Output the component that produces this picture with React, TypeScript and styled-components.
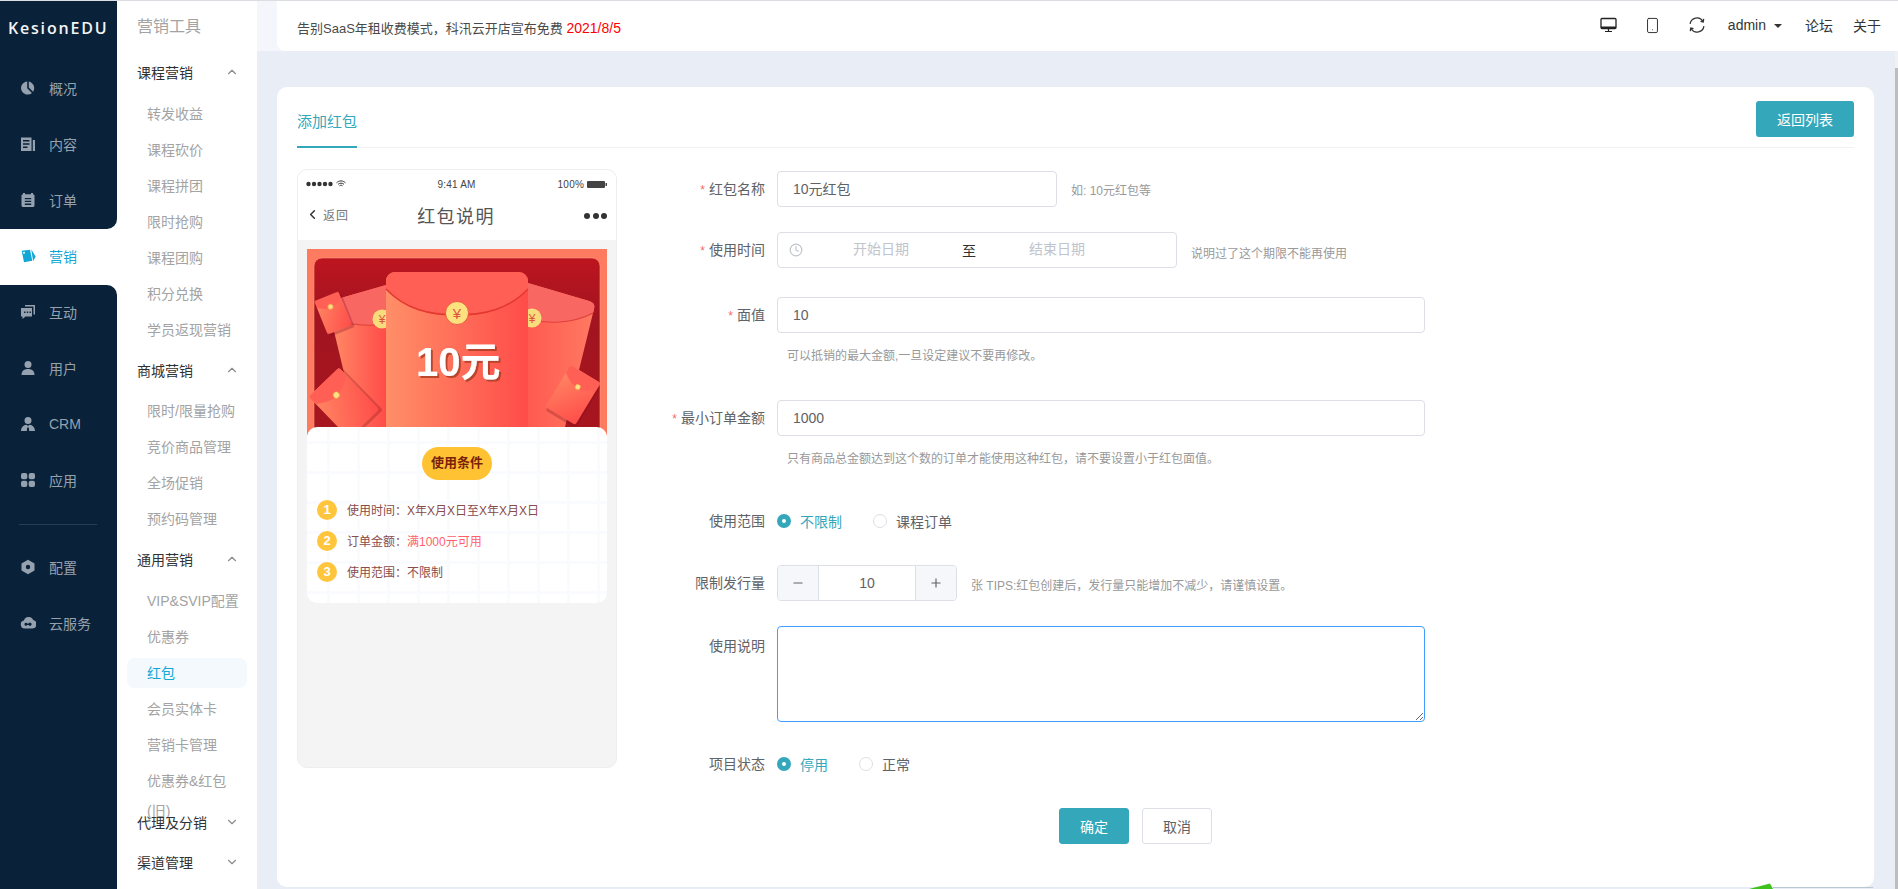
import React from 'react';
import styled, { createGlobalStyle } from 'styled-components';
import { ChevronUp, ChevronDown, ChevronLeft, Clock, Minus, Plus, Smartphone } from 'lucide-react';

const Global = createGlobalStyle`
  html, body { margin: 0; padding: 0; height: 889px; overflow: hidden; background: #fff; }
  body { font-family: "Liberation Sans", "Noto Sans CJK SC", sans-serif; font-size: 14px; }
  * { box-sizing: border-box; }
`;

const Page = styled.div`
  position: relative; display: flex; width: 1898px; height: 889px;
  border-top: 1px solid #dcdde2; overflow: hidden;
`;

/* rail */
const Rail = styled.aside`width: 117px; display: flex; flex-direction: column; background: #fff; flex: none;`;
const RailTop = styled.div`background: #0a2239; border-bottom-right-radius: 10px;`;
const RailBottom = styled.div`flex: 1; background: #0a2239; border-top-right-radius: 10px;`;
const Logo = styled.div`
  height: 60px; padding: 9px 0 0 8px; line-height: 36px; color: #f2f4f6;
  font-family: "Open Sans", "Liberation Sans", sans-serif; font-size: 16px; font-weight: 600; letter-spacing: 1.8px;
`;
const RailItem = styled.div<{ $active?: boolean }>`
  height: 56px; display: flex; align-items: center; padding: 0 0 2px 20px; gap: 13px;
  color: ${p => (p.$active ? '#12a7d6' : '#95a1af')}; font-size: 14px;
  svg { width: 16px; height: 16px; flex: none; fill: currentColor; }
`;
const RailDivider = styled.div`height: 1px; margin: 15px 20px 15px 19px; background: #2a3d52;`;

/* sub menu */
const SubNav = styled.nav`width: 140px; flex: none; background: #fff; overflow: hidden;`;
const SubTitle = styled.div`height: 51px; padding-left: 20px; line-height: 52px; font-size: 16px; color: #a3a3a3;`;
const SubHead = styled.div`
  height: 40px; margin-left: 20px; padding-right: 18px; display: flex; align-items: center; justify-content: space-between;
  color: #303133; font-size: 14px;
  svg { color: #8c8c8c; }
`;
const SubList = styled.div<{ $pt: number; $pb: number }>`
  padding: ${p => p.$pt}px 10px ${p => p.$pb}px; display: flex; flex-direction: column; gap: 6px;
`;
const SubItem = styled.div<{ $active?: boolean }>`
  height: 30px; line-height: 30px; padding-left: 20px; border-radius: 8px; font-size: 14px;
  color: ${p => (p.$active ? '#12a7d6' : '#a3a3a3')};
  background: ${p => (p.$active ? '#f3f9fd' : 'transparent')};
`;

/* main */
const Main = styled.div`flex: 1; min-width: 0; display: flex; flex-direction: column; background: #e9edf6;`;
const HeaderWrap = styled.div`height: 50px; padding-left: 20px; background: #f4f6fb; flex: none;`;
const Header = styled.header`
  height: 50px; background: #fff; border-bottom-left-radius: 8px;
  display: flex; align-items: center; justify-content: space-between; padding: 0 17px 2px 20px; color: #303133;
`;
const Notice = styled.div`padding-top: 4px; font-size: 13px; color: #4a4a4a; span { color: #f00; font-size: 14px; }`;
const HeaderTools = styled.div`display: flex; align-items: center; font-size: 14px; color: #333;`;
const ToolIcon = styled.span`display: inline-flex; width: 44px; justify-content: center;`;
const Admin = styled.span`margin-left: 9px;`;
const Caret = styled.i`display: inline-block; width: 0; height: 0; margin: 2px 23px 0 8px; border: 4px solid transparent; border-top-color: #333; border-bottom: 0;`;
const HeaderLink = styled.span`& + & { margin-left: 20px; }`;
const BodyRow = styled.div`flex: 1; min-height: 0; display: flex;`;
const Content = styled.main`flex: 1; min-width: 0; padding: 36px 21px 0 20px;`;
const Track = styled.div`width: 3px; flex: none; background: #f1f1f1; padding-top: 17px; display: flex;`;
const Thumb = styled.div`flex: 1; background: #bdbdbd;`;

const Card = styled.section`
  height: 801px; background: #fff; border-radius: 10px; padding: 0 20px; border-bottom: 1px solid #e6edf3;
`;
const TabRow = styled.div`height: 61px; display: flex; justify-content: space-between; border-bottom: 1px solid #f0f1f3;`;
const Tab = styled.div`height: 61px; padding-top: 9px; line-height: 52px; border-bottom: 2px solid #35a7bb; color: #35a7bb; font-size: 15px;`;
const ReturnBtn = styled.button`
  margin-top: 14px; width: 98px; height: 36px; border: 0; border-radius: 3px; background: #35a7bb; color: #fff;
  font: inherit; font-size: 14px;
`;
const Split = styled.div`display: flex; padding-top: 21px;`;

/* phone */
const Phone = styled.div`width: 320px; height: 599px; flex: none; border: 1px solid #ecedf0; border-radius: 10px; background: #f4f4f4; overflow: hidden;`;
const PhoneTop = styled.div`height: 70px; background: #fff;`;
const StatusBar = styled.div`height: 28px; padding: 0 9px 0 8px; display: grid; grid-template-columns: 1fr auto 1fr; align-items: center; font-size: 10px; color: #444; font-weight: 400; letter-spacing: .2px;`;
const StatusSide = styled.div<{ $end?: boolean }>`display: flex; align-items: center; gap: 3px; justify-content: ${p => (p.$end ? 'flex-end' : 'flex-start')};`;
const NavBar = styled.div`height: 36px; padding: 0 9px 3px 7px; display: grid; grid-template-columns: 1fr auto 1fr; align-items: center;`;
const BackLink = styled.div`display: flex; align-items: center; gap: 3px; font-size: 12px; letter-spacing: 1px; color: #777; svg { color: #333; }`;
const NavTitle = styled.div`font-size: 18px; letter-spacing: 1.4px; color: #555;`;
const NavDots = styled.div`display: flex; justify-content: flex-end; gap: 2.5px; padding-top: 3px; i { width: 6px; height: 6px; border-radius: 50%; background: #333; }`;
const PhoneBody = styled.div`padding: 9px 9px 0;`;
const Banner = styled.div`height: 186px; background: #ff7b60;  svg { display: block; }`;
const InfoCard = styled.div`
  position: relative; margin-top: -8px; height: 176px; border-radius: 10px; padding-top: 20px;
  background-color: #fff;
  background-image: linear-gradient(#fafbfe 3px, transparent 3px), linear-gradient(90deg, #fafbfe 3px, transparent 3px);
  background-size: 30px 30px; background-position: 20px 14px;
`;
const Pill = styled.div`
  width: 70px; height: 33px; margin: 0 auto 14px; border-radius: 17px; background: #ffc233; color: #7a1f0a;
  font-size: 13px; font-weight: 700; line-height: 32px; text-align: center;
`;
const CondRow = styled.div`height: 31px; padding-left: 10px; display: flex; align-items: center; gap: 10px; font-size: 12px; color: #8a4b4b; b { color: #ff5f6d; font-weight: 400; }`;
const CondNum = styled.span`width: 20px; height: 20px; border-radius: 50%; background: #ffc53d; color: #fff; font-size: 13px; font-weight: 700; line-height: 20px; text-align: center;`;

/* form */
const Form = styled.div`flex: 1; padding: 2px 0 0 19px; color: #606266;`;
const Row = styled.div<{ $mb: number; $top?: boolean }>`
  display: flex; align-items: ${p => (p.$top ? 'flex-start' : 'center')}; margin-bottom: ${p => p.$mb}px; min-height: 20px;
`;
const Label = styled.label<{ $tall?: boolean }>`
  width: 129px; margin-right: 12px; flex: none; text-align: right; font-size: 14px; color: #606266;
  padding-top: ${p => (p.$tall ? '10px' : '0')}; line-height: 20px;
  em { color: #f56c6c; font-style: normal; margin-right: 4px; font-size: 12px; }
`;
const Field = styled.div<{ $w: number }>`
  width: ${p => p.$w}px; height: 36px; border: 1px solid #dcdfe6; border-radius: 4px; padding: 0 15px; line-height: 34px;
  font-size: 14px; color: #606266; flex: none;
`;
const Hint = styled.span<{ $dy: number }>`margin-left: 14px; font-size: 12px; color: #999; padding-top: ${p => p.$dy}px;`;
const Help = styled.div<{ $mb: number }>`margin: 0 0 ${p => p.$mb}px 151px; height: 20px; line-height: 20px; font-size: 12px; color: #999;`;
const DateBox = styled.div`
  width: 400px; height: 36px; border: 1px solid #dcdfe6; border-radius: 4px; padding-left: 11px; flex: none;
  display: flex; align-items: center; svg { color: #c0c4cc; flex: none; }
`;
const DateSlot = styled.span`width: 156px; text-align: center; color: #c0c4cc; font-size: 14px; padding-bottom: 4px;`;
const DateSep = styled.span`width: 20px; text-align: center; color: #303133; font-size: 14px;`;
const RadioGroup = styled.div`display: flex; align-items: center;`;
const Radio = styled.span<{ $on?: boolean }>`
  display: inline-flex; align-items: center; gap: 9px; margin-right: 31px; font-size: 14px;
  color: ${p => (p.$on ? '#35a7bb' : '#606266')};
  &::before {
    content: ''; width: 14px; height: 14px; border-radius: 50%; box-sizing: border-box;
    border: ${p => (p.$on ? '5px solid #35a7bb' : '1px solid #dcdfe6')}; background: #fff;
  }
`;
const Stepper = styled.div`width: 180px; height: 36px; flex: none; display: flex; border: 1px solid #dcdfe6; border-radius: 4px; overflow: hidden;`;
const StepBtn = styled.span`width: 40px; flex: none; background: #f5f7fa; display: flex; align-items: center; justify-content: center; color: #606266;`;
const StepValue = styled.span`flex: 1; border: solid #dcdfe6; border-width: 0 1px; text-align: center; line-height: 34px; font-size: 14px; color: #606266;`;
const NoteArea = styled.textarea`
  display: block; width: 648px; height: 96px; border: 1px solid #409eff; border-radius: 4px; outline: none; resize: vertical; flex: none;
`;
const Actions = styled.div`display: flex; gap: 13px; padding-left: 423px;`;
const Btn = styled.button<{ $primary?: boolean }>`
  width: 70px; height: 36px; border-radius: 3px; font: inherit; font-size: 14px;
  border: 1px solid ${p => (p.$primary ? '#35a7bb' : '#dcdfe6')};
  background: ${p => (p.$primary ? '#35a7bb' : '#fff')}; color: ${p => (p.$primary ? '#fff' : '#606266')};
`;
const Streak = styled.svg`position: absolute; left: 1748px; top: 881px;`;

const ICONS: Record<string, React.ReactNode> = {
  pie: <><path d="M7.2 1.6v6.6l4.7 4.7A6.5 6.5 0 1 1 7.2 1.6z" /><path d="M8.8 1.6a6.6 6.6 0 0 1 4.3 10.1L8.8 7.4z" /></>,
  doc: <path fillRule="evenodd" d="M1 1.5h10.5v13.5H1zM3 4v1.5h6.5V4zm0 3.2v1.5h6.5V7.2zm0 3.2v1.5h4.5v-1.5zM12.8 4H15v11h-2.2z" />,
  list: <path fillRule="evenodd" d="M3 1h2v1.2h6V1h2v1.2c1 .2 1.5.7 1.5 1.6v9.4c0 1.1-.6 1.8-1.8 1.8H3.3c-1.2 0-1.8-.7-1.8-1.8V3.8c0-.9.5-1.4 1.5-1.6zM4.8 6v1.3h6.4V6zm0 2.8v1.3h6.4V8.8zm0 2.8v1.3h6.4v-1.3z" />,
  tags: <path fillRule="evenodd" d="M1.700 2.700 10 1.700l2.300 11-8.300 1.600zM4 3.800a1 1 0 1 0 0 2 1 1 0 0 0 0-2zM11.200 1.300l4.500 7.400-2.600 4.300z" />,
  chat: <path fillRule="evenodd" d="M5 1h10v9.500h-1.500V2.500H5zM1 4h11v8.500H5.500L2.500 15v-2.500H1zm3 3.500v1.500h1.400V7.500zm2.800 0v1.500h1.400V7.500zm2.800 0v1.500H11V7.500z" />,
  user: <><circle cx="8" cy="4.500" r="3.500" /><path d="M1.500 15c0-4 2.500-6 6.500-6s6.500 2 6.500 6z" /></>,
  crm: <path fillRule="evenodd" d="M8 1a3.500 3.500 0 1 1 0 7 3.500 3.500 0 0 1 0-7zM1 15c0-3.500 2.300-6 5.500-6.300L8 10l1.500-1.300c3.200.3 5.500 2.800 5.500 6.300zm6.200-3.500L6.800 15h2.400l-.4-3.500z" />,
  grid: <><rect x="1" y="1" width="6.300" height="6.300" rx="2" /><rect x="8.700" y="1" width="6.300" height="6.300" rx="2" /><rect x="1" y="8.700" width="6.300" height="6.300" rx="2" /><rect x="8.700" y="8.700" width="6.300" height="6.300" rx="2" /></>,
  hex: <path fillRule="evenodd" d="M8 .8 14.500 4.400v7.200L8 15.200 1.500 11.600V4.400zM8 5.800a2.200 2.200 0 1 0 0 4.400 2.200 2.200 0 0 0 0-4.400z" />,
  cloud: <path fillRule="evenodd" d="M4.800 13.500A4 4 0 0 1 3.900 5.600a5 5 0 0 1 9.300-.6 4.300 4.300 0 0 1-1 8.500zM6 7.800a1.500 1.500 0 1 0 1.300 2.200h1.400a1.500 1.500 0 1 0 0-1.500H7.300A1.500 1.500 0 0 0 6 7.800z" />,
};

const RailIcon = ({ name }: { name: string }) => <svg viewBox="0 0 16 16">{ICONS[name]}</svg>;

const railA = [['pie', '概况'], ['doc', '内容'], ['list', '订单']];
const railB = [['chat', '互动'], ['user', '用户'], ['crm', 'CRM'], ['grid', '应用']];
const railC = [['hex', '配置'], ['cloud', '云服务']];

const Envelope = ({ x, y, w, h, rot, blur }: { x: number; y: number; w: number; h: number; rot: number; blur?: boolean }) => (
  <g transform={`translate(${x} ${y}) rotate(${rot})`} filter={blur ? 'url(#soft)' : undefined}>
    <rect x={-w / 2 + 2} y={-h / 2 + 3} width={w} height={h} rx="2" fill="#7a0f14" opacity=".28" />
    <rect x={-w / 2} y={-h / 2} width={w} height={h} rx="2.500" fill="url(#envS)" />
    <path d={`M${-w / 2} ${-h / 2 + 2}a2 2 0 0 1 2-2h${w - 4}a2 2 0 0 1 2 2v${h * 0.14}q${-w / 2} ${h * 0.3} ${-w} 0z`} fill="#ff5f55" />
    <circle cx="0" cy={-h * 0.19} r={Math.max(2.500, w * 0.075)} fill="#fbe27f" stroke="#e9a24f" strokeWidth=".5" />
  </g>
);

const BannerArt = () => (
  <svg width="300" height="186" viewBox="0 0 300 186">
    <defs>
      <linearGradient id="bgD" x1="0" y1="0" x2="0" y2="1"><stop offset="0" stopColor="#bd151f" /><stop offset=".35" stopColor="#a11420" /><stop offset="1" stopColor="#a8161f" /></linearGradient>
      <linearGradient id="env" x1="0" y1="0" x2="1" y2="0"><stop offset="0" stopColor="#ff8f68" /><stop offset="1" stopColor="#ff4c49" /></linearGradient>
      <linearGradient id="envR" x1="0" y1="0" x2="1" y2="0"><stop offset="0" stopColor="#ff5a50" /><stop offset="1" stopColor="#ff7a62" /></linearGradient>
      <linearGradient id="envS" x1="0" y1="0" x2="1" y2="1"><stop offset="0" stopColor="#ff8a65" /><stop offset="1" stopColor="#ff4c49" /></linearGradient>
      <filter id="soft" x="-20%" y="-20%" width="140%" height="140%"><feGaussianBlur stdDeviation=".7" /></filter>
      <filter id="tx" x="-20%" y="-20%" width="140%" height="140%"><feDropShadow dx="2" dy="2" stdDeviation=".6" floodColor="#a83a20" floodOpacity=".8" /></filter>
    </defs>
    <rect x="7" y="9" width="286" height="180" rx="8" fill="url(#bgD)" stroke="#ff9a80" strokeWidth=".6" />
    <path d="M20 53 79 36V178H50z" fill="url(#env)" />
    <path d="M20 53 79 36V75C55 78 38 74 23 68z" fill="#f96763" />
    <path d="M23 68C40 76 58 78 79 75" fill="none" stroke="#e0403a" strokeWidth="1.200" />
    <circle cx="75" cy="70" r="9.500" fill="#f7dc7c" />
    <text x="75" y="74.500" textAnchor="middle" fontSize="12" fill="#e2533f">¥</text>
    <path d="M221 34 282 52c5 2 6 4 5 8L258 178H221z" fill="url(#envR)" />
    <path d="M221 34 282 52c5 2 6 4 5 8l-1 4C265 75 240 75 221 70z" fill="#f96763" />
    <path d="M221 70C240 75 265 75 286 64" fill="none" stroke="#e0403a" strokeWidth="1.200" />
    <circle cx="225" cy="69" r="9.500" fill="#f7dc7c" />
    <text x="225" y="73.500" textAnchor="middle" fontSize="12" fill="#e2533f">¥</text>
    <rect x="79" y="23" width="142" height="170" rx="9" fill="url(#env)" />
    <path d="M79 32a9 9 0 0 1 9-9H212a9 9 0 0 1 9 9V40C202 60 178 66 150 66S98 60 79 40z" fill="#ff5f55" />
    <path d="M79 40C98 60 122 66 150 66S202 60 221 40" fill="none" stroke="#e2382f" strokeWidth="1.500" />
    <circle cx="150" cy="64" r="11.500" fill="#fbe27f" stroke="#e8473b" strokeWidth=".8" />
    <text x="150" y="69.500" textAnchor="middle" fontSize="15" fill="#e2533f">¥</text>
    <text x="109" y="127" fontFamily="Liberation Sans, Noto Sans CJK SC, sans-serif" fontSize="40" fontWeight="700" fill="#fff" filter="url(#tx)">10元</text>
    <Envelope x={26} y={64} w={26} h={36} rot={-22} blur />
    <Envelope x={37} y={154} w={42} h={58} rot={-44} />
    <Envelope x={266} y={146} w={35} h={49} rot={31} />
  </svg>
);

export default function App() {
  return (
    <>
      <Global />
      <Page>
        <Rail>
          <RailTop>
            <Logo>KesionEDU</Logo>
            {railA.map(([i, t]) => <RailItem key={t}><RailIcon name={i} />{t}</RailItem>)}
          </RailTop>
          <RailItem $active><RailIcon name="tags" />营销</RailItem>
          <RailBottom>
            {railB.map(([i, t]) => <RailItem key={t}><RailIcon name={i} />{t}</RailItem>)}
            <RailDivider />
            {railC.map(([i, t]) => <RailItem key={t}><RailIcon name={i} />{t}</RailItem>)}
          </RailBottom>
        </Rail>

        <SubNav>
          <SubTitle>营销工具</SubTitle>
          <SubHead>课程营销<ChevronUp size={14} /></SubHead>
          <SubList $pt={7} $pb={5}>{['转发收益', '课程砍价', '课程拼团', '限时抢购', '课程团购', '积分兑换', '学员返现营销'].map(t => <SubItem key={t}>{t}</SubItem>)}</SubList>
          <SubHead>商城营销<ChevronUp size={14} /></SubHead>
          <SubList $pt={6} $pb={5}>{['限时/限量抢购', '竞价商品管理', '全场促销', '预约码管理'].map(t => <SubItem key={t}>{t}</SubItem>)}</SubList>
          <SubHead>通用营销<ChevronUp size={14} /></SubHead>
          <SubList $pt={7} $pb={6}>
            {['VIP&SVIP配置', '优惠券'].map(t => <SubItem key={t}>{t}</SubItem>)}
            <SubItem $active>红包</SubItem>
            {['会员实体卡', '营销卡管理', '优惠券&红包(旧)'].map(t => <SubItem key={t}>{t}</SubItem>)}
          </SubList>
          <SubHead>代理及分销<ChevronDown size={14} /></SubHead>
          <SubHead>渠道管理<ChevronDown size={14} /></SubHead>
        </SubNav>

        <Main>
          <HeaderWrap>
            <Header>
              <Notice>告别SaaS年租收费模式，科汛云开店宣布免费 <span>2021/8/5</span></Notice>
              <HeaderTools>
                <ToolIcon>
                  <svg width="17" height="16" viewBox="0 0 17 16" fill="none" stroke="#222"><rect x="1" y="1.500" width="15" height="10" rx="1" strokeWidth="1.300" /><path d="M1 10.500h15" strokeWidth="2" /><path d="M5 14.500h7M8.500 12v2.500" strokeWidth="1.200" /></svg>
                </ToolIcon>
                <ToolIcon><Smartphone size={17} strokeWidth={1.400} color="#333" /></ToolIcon>
                <ToolIcon>
                  <svg width="18" height="18" viewBox="0 0 17 17" fill="none" stroke="#333" strokeWidth="1.200"><path d="M2 7.500A6.500 6.500 0 0 1 14 5" /><path d="M15 9.500A6.500 6.500 0 0 1 3 12" /><path d="M14.800 2.800 14.400 5.600 11.800 5" /><path d="M2.200 14.200 2.600 11.400 5.200 12" /></svg>
                </ToolIcon>
                <Admin>admin</Admin>
                <Caret />
                <HeaderLink>论坛</HeaderLink>
                <HeaderLink>关于</HeaderLink>
              </HeaderTools>
            </Header>
          </HeaderWrap>
          <BodyRow>
            <Content>
              <Card>
                <TabRow>
                  <Tab>添加红包</Tab>
                  <ReturnBtn>返回列表</ReturnBtn>
                </TabRow>
                <Split>
                  <Phone>
                    <PhoneTop>
                      <StatusBar>
                        <StatusSide>
                          <svg width="27" height="6" viewBox="0 0 27 6" fill="#333"><circle cx="2.500" cy="3" r="2.200" /><circle cx="8" cy="3" r="2.200" /><circle cx="13.500" cy="3" r="2.200" /><circle cx="19" cy="3" r="2.200" /><circle cx="24.500" cy="3" r="2.200" /></svg>
                          <svg width="10" height="8" viewBox="0 0 10 8" fill="none" stroke="#333" strokeWidth="1"><path d="M.5 2.800C3 .3 7 .3 9.500 2.800M2 4.300c1.700-1.500 4.300-1.500 6 0M3.500 5.800c.9-.7 2.100-.7 3 0" /></svg>
                        </StatusSide>
                        <span>9:41 AM</span>
                        <StatusSide $end>
                          100%
                          <svg width="20" height="7" viewBox="0 0 20 7" fill="#444"><rect x="0" y="0" width="18" height="7" rx="1" /><rect x="18.500" y="2" width="1.500" height="3" /></svg>
                        </StatusSide>
                      </StatusBar>
                      <NavBar>
                        <BackLink><ChevronLeft size={15} strokeWidth={2.400} />返回</BackLink>
                        <NavTitle>红包说明</NavTitle>
                        <NavDots><i /><i /><i /></NavDots>
                      </NavBar>
                    </PhoneTop>
                    <PhoneBody>
                      <Banner><BannerArt /></Banner>
                      <InfoCard>
                        <Pill>使用条件</Pill>
                        <CondRow><CondNum>1</CondNum>使用时间：X年X月X日至X年X月X日</CondRow>
                        <CondRow><CondNum>2</CondNum><span>订单金额：<b>满1000元可用</b></span></CondRow>
                        <CondRow><CondNum>3</CondNum>使用范围：不限制</CondRow>
                      </InfoCard>
                    </PhoneBody>
                  </Phone>

                  <Form>
                    <Row $mb={25}>
                      <Label><em>*</em>红包名称</Label>
                      <Field $w={280}>10元红包</Field>
                      <Hint $dy={0}>如: 10元红包等</Hint>
                    </Row>
                    <Row $mb={29}>
                      <Label><em>*</em>使用时间</Label>
                      <DateBox>
                        <Clock size={14} />
                        <DateSlot>开始日期</DateSlot>
                        <DateSep>至</DateSep>
                        <DateSlot>结束日期</DateSlot>
                      </DateBox>
                      <Hint $dy={4}>说明过了这个期限不能再使用</Hint>
                    </Row>
                    <Row $mb={13}>
                      <Label><em>*</em>面值</Label>
                      <Field $w={648}>10</Field>
                    </Row>
                    <Help $mb={34}>可以抵销的最大金额,一旦设定建议不要再修改。</Help>
                    <Row $mb={13}>
                      <Label><em>*</em>最小订单金额</Label>
                      <Field $w={648}>1000</Field>
                    </Row>
                    <Help $mb={42}>只有商品总金额达到这个数的订单才能使用这种红包，请不要设置小于红包面值。</Help>
                    <Row $mb={34}>
                      <Label>使用范围</Label>
                      <RadioGroup><Radio $on>不限制</Radio><Radio>课程订单</Radio></RadioGroup>
                    </Row>
                    <Row $mb={25}>
                      <Label>限制发行量</Label>
                      <Stepper>
                        <StepBtn><Minus size={14} /></StepBtn>
                        <StepValue>10</StepValue>
                        <StepBtn><Plus size={14} /></StepBtn>
                      </Stepper>
                      <Hint $dy={2}>张 TIPS:红包创建后，发行量只能增加不减少，请谨慎设置。</Hint>
                    </Row>
                    <Row $mb={32} $top>
                      <Label $tall>使用说明</Label>
                      <NoteArea />
                    </Row>
                    <Row $mb={34}>
                      <Label>项目状态</Label>
                      <RadioGroup><Radio $on>停用</Radio><Radio>正常</Radio></RadioGroup>
                    </Row>
                    <Actions>
                      <Btn $primary>确定</Btn>
                      <Btn>取消</Btn>
                    </Actions>
                  </Form>
                </Split>
              </Card>
            </Content>
            <Track><Thumb /></Track>
          </BodyRow>
        </Main>
        <Streak width="126" height="8" viewBox="0 0 126 8">
          <path d="M25 5.500H125" stroke="#b9c7d4" strokeWidth="1" />
          <path d="M1 7 22 1.500 25 7z" fill="#3fc21c" />
        </Streak>
      </Page>
    </>
  );
}
